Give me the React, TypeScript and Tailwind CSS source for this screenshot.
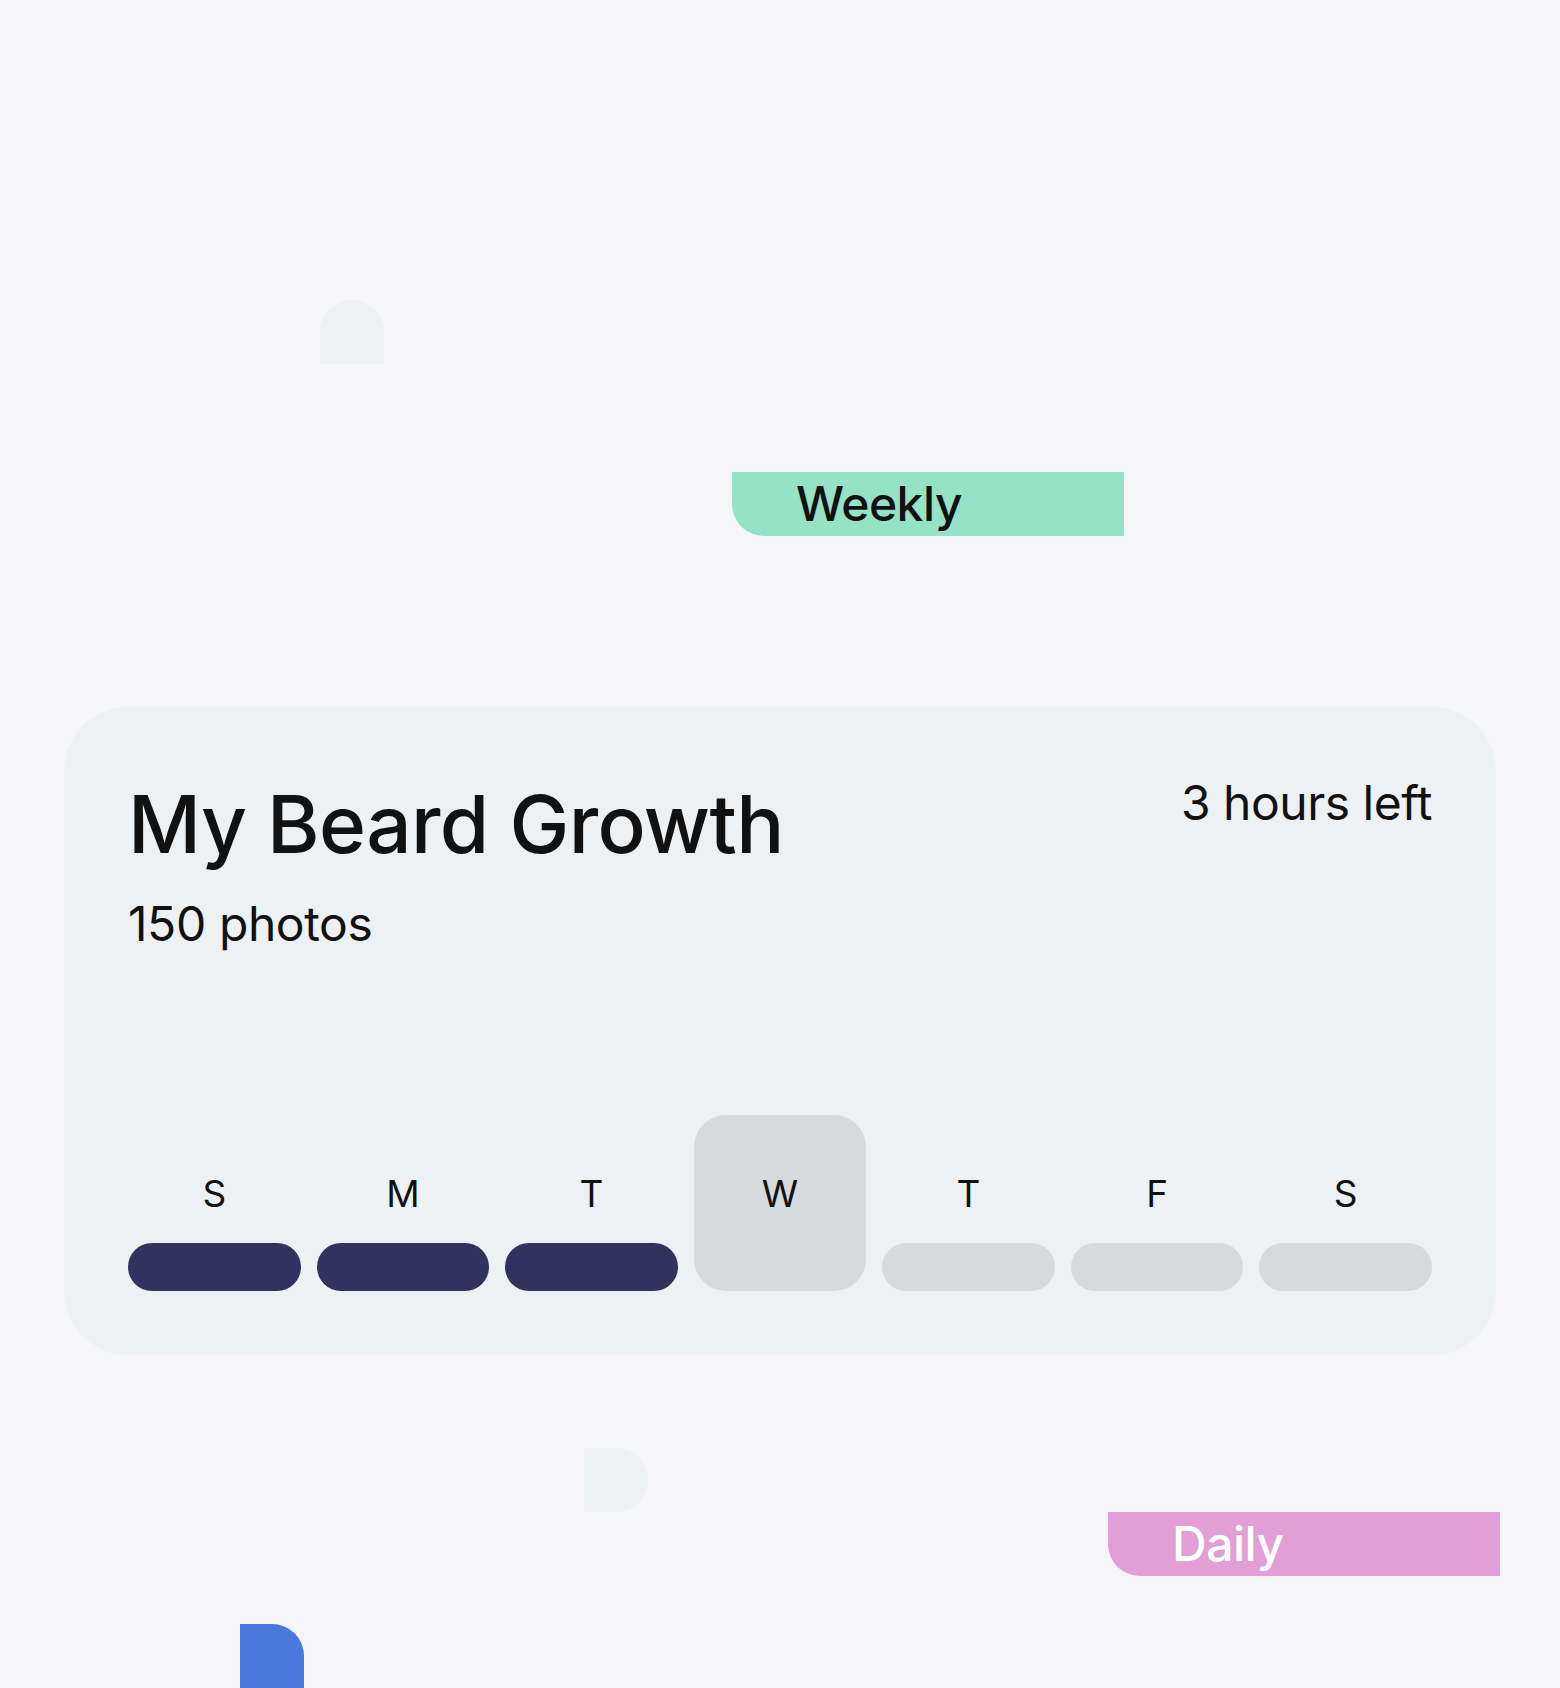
const days = [
  { label: "S", done: true },
  { label: "M", done: true },
  { label: "T", done: true },
  { label: "W", done: false, today: true },
  { label: "T", done: false },
  { label: "F", done: false },
  { label: "S", done: false },
];

function DayColumn({ label, done, today }: { label: string; done: boolean; today?: boolean }) {
  return (
    <div
      className={`flex h-[176px] flex-col items-center justify-end ${
        today ? "rounded-[32px] bg-[#d6dadd]" : ""
      }`}
    >
      <span className="mb-[25px] block h-12 text-[37px] leading-[48px] text-[#111]">{label}</span>
      {/* today's slot keeps the bar's room but has no bar of its own */}
      <div
        className={`h-12 w-full rounded-full ${
          today ? "bg-transparent" : done ? "bg-[#32325f]" : "bg-[#d6dadd]"
        }`}
      />
    </div>
  );
}

function GrowthCard() {
  return (
    <div className="mx-16 mt-[171px] flex h-[648px] flex-col rounded-[64px] bg-[#edf1f4] p-16">
      <div className="flex items-start justify-between">
        <div>
          <h1 className="text-[80px] leading-[106px] font-medium tracking-[-0.6px] text-[#111]">
            My Beard Growth
          </h1>
          <p className="mt-[11px] text-[48px] leading-[72px] tracking-[-0.4px] text-[#111]">150 photos</p>
        </div>
        <span className="text-[48px] leading-[64px] tracking-[-0.5px] text-[#111]">3 hours left</span>
      </div>
      <div className="mt-auto grid grid-cols-7 gap-4">
        {days.map((d, i) => (
          <DayColumn key={i} label={d.label} done={d.done} today={d.today} />
        ))}
      </div>
    </div>
  );
}

export default function App() {
  return (
    <div
      className="h-[1688px] overflow-hidden bg-[#f6f6f8]"
      style={{ fontFamily: "Inter, 'Noto Sans', sans-serif" }}
    >
      <div className="mt-[300px] ml-[320px] h-16 w-16 rounded-t-[32px] bg-[#edf1f4]" />
      <div className="mt-[108px] ml-[732px] flex h-16 w-[392px] items-center rounded-bl-[32px] bg-[#95e2c7] pl-16 text-[48px] leading-[64px] font-medium tracking-[-0.5px] text-[#111]">
        Weekly
      </div>
      <GrowthCard />
      <div className="mt-[93px] ml-[584px] h-16 w-16 rounded-r-[32px] bg-[#edf1f4]" />
      <div className="ml-[1108px] flex h-16 w-[392px] items-center rounded-bl-[32px] bg-[#e19fd6] pl-16 text-[48px] leading-[64px] font-medium tracking-[-0.5px] text-white">
        Daily
      </div>
      <div className="mt-[48px] ml-[240px] h-16 w-16 rounded-tr-[32px] bg-[#4a78df]" />
    </div>
  );
}
